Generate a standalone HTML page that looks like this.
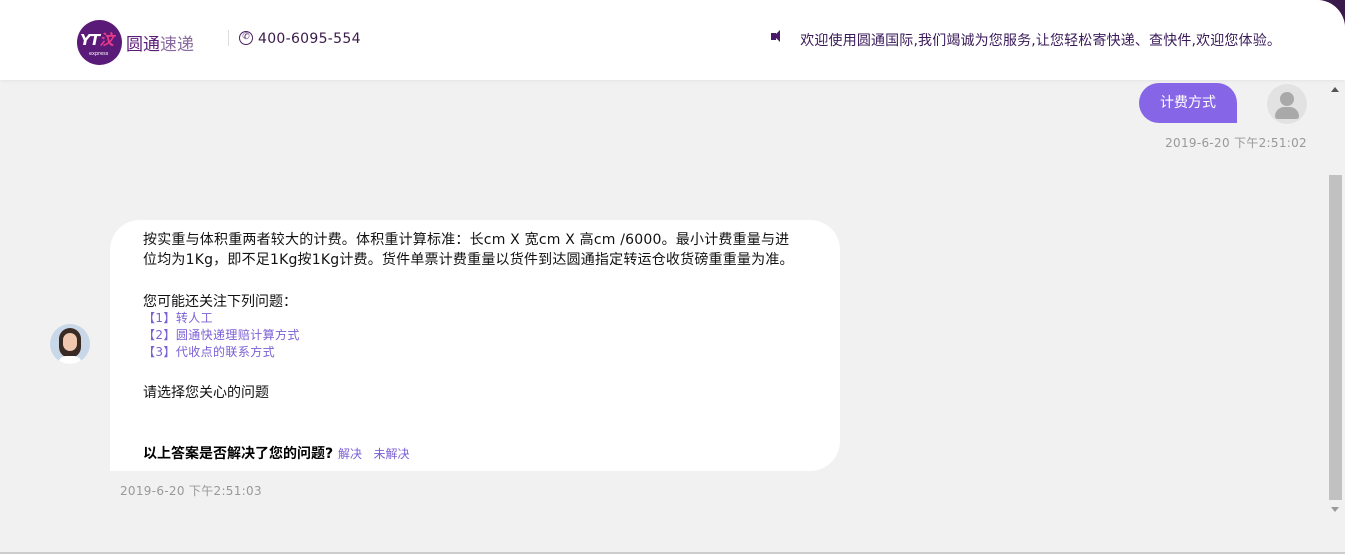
<!DOCTYPE html>
<html><head><meta charset="utf-8"><style>
*{margin:0;padding:0;box-sizing:border-box}
body{width:1345px;height:554px;overflow:hidden;background:#3a1a4a;font-family:"DejaVu Sans","Noto Sans CJK SC",sans-serif;position:relative}
.page{position:absolute;left:0;top:0;width:1345px;height:554px;background:#f1f1f1;border-top-right-radius:28px;overflow:hidden}
.hdr{position:absolute;left:0;top:0;width:1345px;height:80px;background:#fff;box-shadow:0 1px 3px rgba(0,0,0,.06)}
.abs{position:absolute;white-space:nowrap}
.link{color:#7a5fd6}
</style></head><body><div class="page">
<div class="hdr">
 <div class="abs" style="left:77px;top:20px;width:45px;height:45px;border-radius:50%;background:#5a1a78"></div>
 <div class="abs" style="left:80px;top:29px;color:#fff;font-weight:bold;font-style:italic;font-size:15px;letter-spacing:-1px">YT<span style="color:#e8398a">汶</span></div>
 <div class="abs" style="left:89px;top:51px;color:#fff;font-size:5px">express</div>
 <div class="abs" style="left:126px;top:30px;font-size:17px;color:#5a1a78">圆通<span style="color:#8a6aa0">速递</span></div>
 <div class="abs" style="left:228px;top:30px;width:1px;height:16px;background:#ddd"></div>
 <div class="abs" style="left:239px;top:31px;width:14px;height:14px;border:1.5px solid #4a2060;border-radius:50%;font-size:9px;line-height:11px;text-align:center;color:#4a2060">✆</div>
 <div class="abs" style="left:258px;top:31px;font-size:14px;color:#3a1a4a;letter-spacing:0.3px">400-6095-554</div>
 <div class="abs" style="left:771px;top:33px;width:5px;height:7px;background:#4a1a6a"></div>
 <div class="abs" style="left:774px;top:30px;width:0;height:0;border-top:6.5px solid transparent;border-bottom:6.5px solid transparent;border-right:6px solid #4a1a6a"></div>
 <div class="abs" style="right:64px;top:30px;font-size:14px;color:#3a1a5a;letter-spacing:0.15px">欢迎使用圆通国际,我们竭诚为您服务,让您轻松寄快递、查快件,欢迎您体验。</div>
</div>
<div class="abs" style="left:1139px;top:83px;width:98px;height:40px;background:#8666e6;border-radius:20px 20px 0 20px;color:#fff;font-size:14px;line-height:40px;text-align:center">计费方式</div>
<div class="abs" style="left:1267px;top:84px;width:40px;height:40px;border-radius:50%;background:#e2e2e2;overflow:hidden">
 <div class="abs" style="left:13px;top:8px;width:14px;height:14px;border-radius:50%;background:#a9a9a9"></div>
 <div class="abs" style="left:8px;top:23px;width:24px;height:12px;border-radius:10px 10px 3px 3px;background:#a9a9a9"></div>
</div>
<div class="abs" style="right:38px;top:134px;font-size:12px;color:#999;letter-spacing:0.3px">2019-6-20 下午2:51:02</div>
<div class="abs" style="left:50px;top:324px;width:40px;height:40px;border-radius:50%;background:#c9d8e8;overflow:hidden">
 <div class="abs" style="left:9px;top:4px;width:22px;height:30px;border-radius:11px;background:#3a2a24"></div>
 <div class="abs" style="left:13px;top:9px;width:14px;height:18px;border-radius:7px;background:#f0c8b0"></div>
 <div class="abs" style="left:8px;top:32px;width:24px;height:10px;background:#fff;border-radius:8px 8px 0 0"></div>
</div>
<div class="abs" style="left:110px;top:220px;width:730px;height:251px;background:#fff;border-radius:30px 30px 30px 0"></div>
<div class="abs" style="left:143px;top:230px;font-size:14px;line-height:20px;color:#111;letter-spacing:0.2px">按实重与体积重两者较大的计费。体积重计算标准：长cm X 宽cm X 高cm /6000。最小计费重量与进<br>位均为1Kg，即不足1Kg按1Kg计费。货件单票计费重量以货件到达圆通指定转运仓收货磅重重量为准。</div>
<div class="abs" style="left:143px;top:291px;font-size:14px;color:#111">您可能还关注下列问题：</div>
<div class="abs link" style="left:143px;top:310px;font-size:12px;line-height:17px;letter-spacing:0.4px">【1】转人工<br>【2】圆通快递理赔计算方式<br>【3】代收点的联系方式</div>
<div class="abs" style="left:143px;top:382px;font-size:14px;color:#111">请选择您关心的问题</div>
<div class="abs" style="left:143px;top:443px;font-size:14px;color:#000;font-weight:bold">以上答案是否解决了您的问题? <span class="link" style="font-weight:normal;font-size:12px">解决 &nbsp; 未解决</span></div>
<div class="abs" style="left:120px;top:482px;font-size:12px;color:#999;letter-spacing:0.3px">2019-6-20 下午2:51:03</div>
<div class="abs" style="left:1331px;top:87px;border-left:4px solid transparent;border-right:4px solid transparent;border-bottom:5px solid #555"></div>
<div class="abs" style="left:1329px;top:175px;width:13px;height:325px;background:#c1c1c1"></div>
<div class="abs" style="left:1331px;top:507px;border-left:4px solid transparent;border-right:4px solid transparent;border-top:5px solid #999"></div>
<div class="abs" style="left:0;top:552px;width:1345px;height:2px;background:#ccc"></div>
</div></body></html>
